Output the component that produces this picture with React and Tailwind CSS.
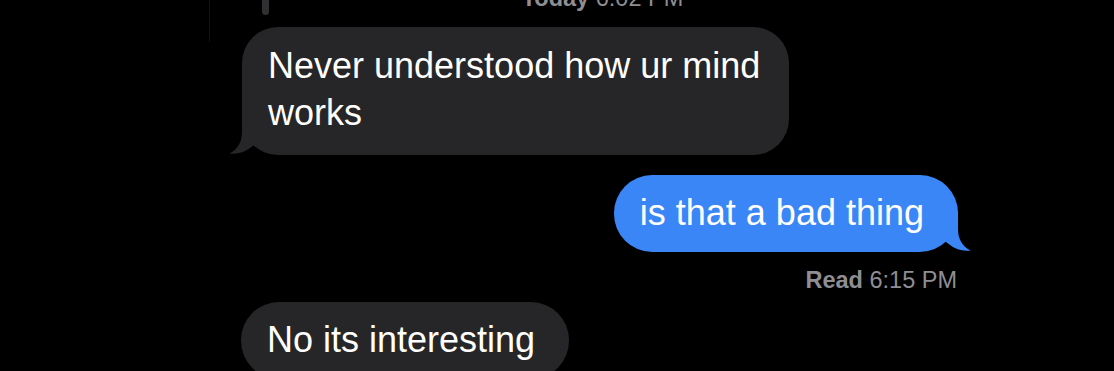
export default function App() {
  return (
    <div className="relative w-[1114px] h-[371px] bg-black overflow-hidden pl-[229px] font-['Liberation_Sans',Arial,sans-serif]">
      <div className="absolute left-[209px] top-0 w-px h-[42px] bg-[#121212]" />
      <div className="absolute left-[262px] top-[-8px] w-[7px] h-[23px] rounded-full bg-[#303032]" />
      <div className="w-[741px] flex flex-col">
        <div className="h-[27px] flex justify-center pl-[6px]">
          <div className="mt-[-13px] text-[23.5px] leading-[23px] text-[#8e8e93] whitespace-nowrap">
            <span className="font-bold">Today</span> 6:02 PM
          </div>
        </div>

        <div className="relative self-start ml-[13px] w-[547px] bg-[#262628] rounded-[36px] pl-[26px] pr-[24px] pt-[15px] pb-[19px] text-white text-[36px] leading-[47px]">
          <svg className="absolute left-[-13px] bottom-0 w-[40px] h-[41px]" viewBox="0 0 40 41">
            <path d="M13 0 L13 18 C13 28 9 35 0.5 39.5 C10 40.8 19 37 27 29 L40 20 L40 0 Z" fill="#262628" />
          </svg>
          <span className="relative">Never understood how ur mind works</span>
        </div>

        <div className="relative self-end mr-[12px] mt-[20px] bg-[#3b86f7] rounded-[38px] pl-[26px] pr-[34px] pt-[14px] pb-[16px] text-white text-[36px] leading-[47px] whitespace-nowrap">
          <svg className="absolute right-[-13px] bottom-0 w-[40px] h-[41px] -scale-x-100" viewBox="0 0 40 41">
            <path d="M13 0 L13 18 C13 28 9 35 0.5 39.5 C10 40.8 19 37 27 29 L40 20 L40 0 Z" fill="#3b86f7" />
          </svg>
          <span className="relative">is that a bad thing</span>
        </div>

        <div className="self-end mr-[13px] mt-[14px] text-[23.5px] leading-[28px] text-[#8e8e93] whitespace-nowrap">
          <span className="font-bold">Read</span> 6:15 PM
        </div>

        <div className="relative self-start ml-[12px] mt-[8px] bg-[#262628] rounded-[38px] pl-[26px] pr-[34px] pt-[14px] pb-[16px] text-white text-[36px] leading-[47px] whitespace-nowrap">
          <span className="relative">No its interesting</span>
        </div>
      </div>
    </div>
  );
}
